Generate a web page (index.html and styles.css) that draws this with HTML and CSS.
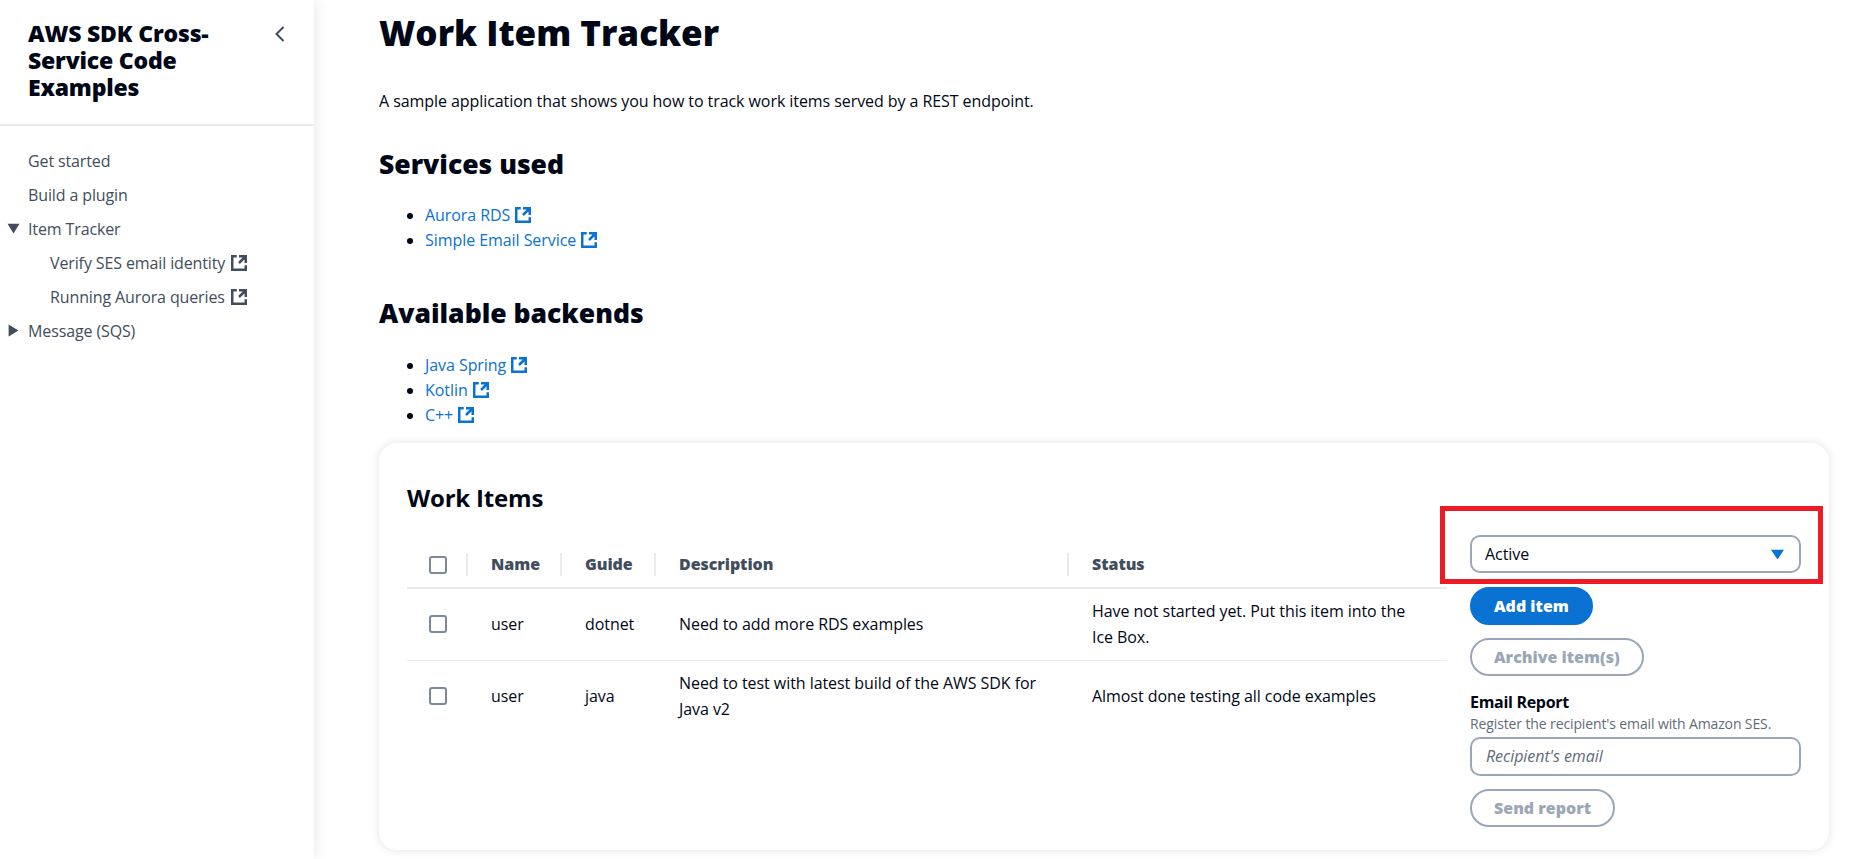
FILE: index.html
```html
<!DOCTYPE html>
<html lang="en">
<head>
<meta charset="utf-8">
<title>Work Item Tracker</title>
<link rel="stylesheet" href="styles.css">
</head>
<body>
<svg class="sprite" width="0" height="0" aria-hidden="true">
  <symbol id="ext" viewBox="0 0 16 16"><path d="M14 8.01v-6H8M14.02 2 8 8M6 2H2v12h12v-4" fill="none" stroke="currentColor" stroke-width="2.2"/></symbol>
</svg>
<div class="app">
  <aside class="side">
    <header class="side-head">
      <h2 class="side-title">AWS SDK Cross-Service Code Examples</h2>
      <svg class="side-close" viewBox="0 0 16 16"><path d="M11.5 1 4.5 8l7 7" fill="none" stroke="currentColor" stroke-width="2"/></svg>
    </header>
    <nav class="side-nav">
      <a class="nav-item">Get started</a>
      <a class="nav-item">Build a plugin</a>
      <a class="nav-item nav-parent"><svg class="tri" viewBox="0 0 12 12"><path d="M0.5 1.5h11L6 10.5z"/></svg>Item Tracker</a>
      <a class="nav-item nav-sub">Verify SES email identity<svg class="ext"><use href="#ext"/></svg></a>
      <a class="nav-item nav-sub">Running Aurora queries<svg class="ext"><use href="#ext"/></svg></a>
      <a class="nav-item nav-parent"><svg class="tri" viewBox="0 0 12 12"><path d="M1.5 0.5v11L10.5 6z"/></svg>Message (SQS)</a>
    </nav>
  </aside>
  <main class="main">
    <h1 class="title">Work Item Tracker</h1>
    <p class="intro">A sample application that shows you how to track work items served by a REST endpoint.</p>
    <h2 class="section">Services used</h2>
    <ul class="links">
      <li><a>Aurora RDS<svg class="ext"><use href="#ext"/></svg></a></li>
      <li><a>Simple Email Service<svg class="ext"><use href="#ext"/></svg></a></li>
    </ul>
    <h2 class="section section-b">Available backends</h2>
    <ul class="links links-b">
      <li><a>Java Spring<svg class="ext"><use href="#ext"/></svg></a></li>
      <li><a>Kotlin<svg class="ext"><use href="#ext"/></svg></a></li>
      <li><a>C++<svg class="ext"><use href="#ext"/></svg></a></li>
    </ul>
    <section class="card">
      <div class="card-left">
        <h2 class="card-title">Work Items</h2>
        <table class="items">
          <colgroup><col class="c-check"><col class="c-short"><col class="c-short"><col class="c-desc"><col></colgroup>
          <thead>
            <tr>
              <th><span class="box"></span></th>
              <th><span class="th-in">Name</span></th>
              <th><span class="th-in">Guide</span></th>
              <th><span class="th-in">Description</span></th>
              <th><span class="th-in">Status</span></th>
            </tr>
          </thead>
          <tbody>
            <tr class="row-a">
              <td><span class="box"></span></td>
              <td>user</td>
              <td>dotnet</td>
              <td>Need to add more RDS examples</td>
              <td>Have not started yet. Put this item into the Ice Box.</td>
            </tr>
            <tr class="row-b">
              <td><span class="box"></span></td>
              <td>user</td>
              <td>java</td>
              <td>Need to test with latest build of the AWS SDK for Java v2</td>
              <td>Almost done testing all code examples</td>
            </tr>
          </tbody>
        </table>
      </div>
      <div class="card-right">
        <div class="select">Active<svg class="caret" viewBox="0 0 12 12"><path d="M0 1.5h12L6 10.5z"/></svg></div>
        <div class="annot"></div>
        <button class="btn btn-primary">Add item</button>
        <button class="btn btn-off">Archive item(s)</button>
        <div class="form-label">Email Report</div>
        <div class="form-hint">Register the recipient's email with Amazon SES.</div>
        <div class="input">Recipient's email</div>
        <button class="btn btn-off btn-send">Send report</button>
      </div>
    </section>
  </main>
</div>
</body>
</html>
```

FILE: styles.css
```css
* { box-sizing: border-box; }
html, body { margin: 0; height: 100%; }
body {
  overflow: hidden;
  background: #fff;
  color: #000716;
  font-family: "Open Sans", "Noto Sans", sans-serif;
  font-size: 16px;
  line-height: 25px;
  letter-spacing: -0.06px;
}
.sprite { position: absolute; }
.app { display: flex; height: 859px; }

.side {
  flex: 0 0 314px;
  background: #fff;
  box-shadow: 0 0 16px rgba(0, 7, 22, .10);
  position: relative;
}
.side-head {
  display: flex;
  justify-content: space-between;
  align-items: flex-start;
  height: 126px;
  padding: 20px 26px 0 28px;
  border-bottom: 2px solid #e9ebed;
}
.side-title {
  margin: 0;
  width: 200px;
  font-size: 23px;
  line-height: 27px;
  font-weight: 800;
  letter-spacing: -0.2px;
}
.side-close { width: 16px; height: 16px; margin-top: 6px; color: #414d5c; flex: none; }
.side-nav { display: flex; flex-direction: column; padding-top: 18px; color: #414d5c; letter-spacing: -0.12px; }
.side-nav .ext { margin-left: 5px; }
.nav-item {
  height: 34px;
  display: flex;
  align-items: center;
  padding-left: 28px;
  position: relative;
}
.nav-sub { padding-left: 50px; }
.tri { position: absolute; left: 7px; top: 10px; width: 13px; height: 13px; fill: #414d5c; }
.ext { display: inline-block; width: 18px; height: 18px; margin-left: 4px; vertical-align: -3px; flex: none; }

.main { flex: 1; min-width: 0; padding: 0 36px 0 65px; }
.title { margin: 8px 0 0; font-size: 35px; line-height: 50px; font-weight: 800; letter-spacing: 0; }
.intro { margin: 31px 0 0; letter-spacing: -0.07px; }
.section { margin: 32px 0 0; font-size: 26.5px; line-height: 36px; font-weight: 800; letter-spacing: 0; }
.section-b { margin-top: 42px; }
.links { margin: 21px 0 0; padding-left: 46px; }
.links-b { margin-top: 22px; }
.links a { color: #0972d3; }

.card {
  margin-top: 15px;
  width: 1450px;
  height: 407px;
  padding: 25px 28px 0 28px;
  display: flex;
  gap: 23px;
  border-radius: 18px;
  background: #fff;
  box-shadow: 0 0 8px rgba(0, 7, 22, .12);
}
.card-left { flex: 0 0 1040px; }
.card-title { margin: 15px 0 0; font-size: 24px; line-height: 30px; font-weight: 700; letter-spacing: -0.2px; }
.items { margin-top: 39px; width: 1040px; table-layout: fixed; border-collapse: collapse; }
.c-check { width: 59px; }
.c-short { width: 94px; }
.c-desc { width: 413px; }
.items th {
  height: 36px;
  padding: 0 0 10px;
  text-align: left;
  font-weight: 800;
  color: #414d5c;
  border-bottom: 2px solid #e9ebed;
}
.th-in { display: block; border-left: 2px solid #e9ebed; padding-left: 23px; height: 23px; line-height: 23px; }
.items td { padding: 0 20px 0 25px; line-height: 26px; border-bottom: 1px solid #e9ebed; }
.items td:first-child, .items th:first-child { padding-left: 22px; padding-right: 0; }
.items tr:last-child td { border-bottom: 0; }
.row-a td { height: 72px; }
.row-b td { height: 72px; }
.box { display: block; width: 18px; height: 18px; border: 2px solid #7d8998; border-radius: 3px; background: #fff; }

.card-right { flex: 0 0 331px; padding-top: 67px; display: flex; flex-direction: column; align-items: flex-start; position: relative; }
.select {
  width: 331px;
  height: 38px;
  border: 2px solid #9ba7b6;
  border-radius: 10px;
  padding-left: 13px;
  display: flex;
  align-items: center;
  justify-content: space-between;
}
.caret { width: 13px; height: 13px; margin-right: 15px; fill: #0972d3; }
.annot {
  position: absolute;
  left: -30px;
  top: 38px;
  width: 383px;
  height: 78px;
  border: 5px solid #ed1c24;
}
.btn {
  height: 38px;
  padding: 0 22px;
  border: 2px solid transparent;
  border-radius: 20px;
  font: 800 16px/22px "Open Sans", "Noto Sans", sans-serif;
}
.btn-primary { margin-top: 14px; background: #0972d3; color: #fff; border-color: #0972d3; }
.btn-off { margin-top: 13px; background: #fff; color: #9ba7b6; border-color: #9ba7b6; }
.form-label { margin-top: 14px; font-weight: 700; line-height: 25px; letter-spacing: -0.3px; }
.form-hint { font-size: 14px; line-height: 20px; color: #5f6b7a; margin-top: -1px; letter-spacing: -0.12px; }
.input {
  margin-top: 3px;
  width: 331px;
  height: 39px;
  border: 2px solid #9ba7b6;
  border-radius: 10px;
  padding-left: 14px;
  display: flex;
  align-items: center;
  font-style: italic;
  color: #5f6b7a;
}
.btn-send { margin-top: 13px; }
```
